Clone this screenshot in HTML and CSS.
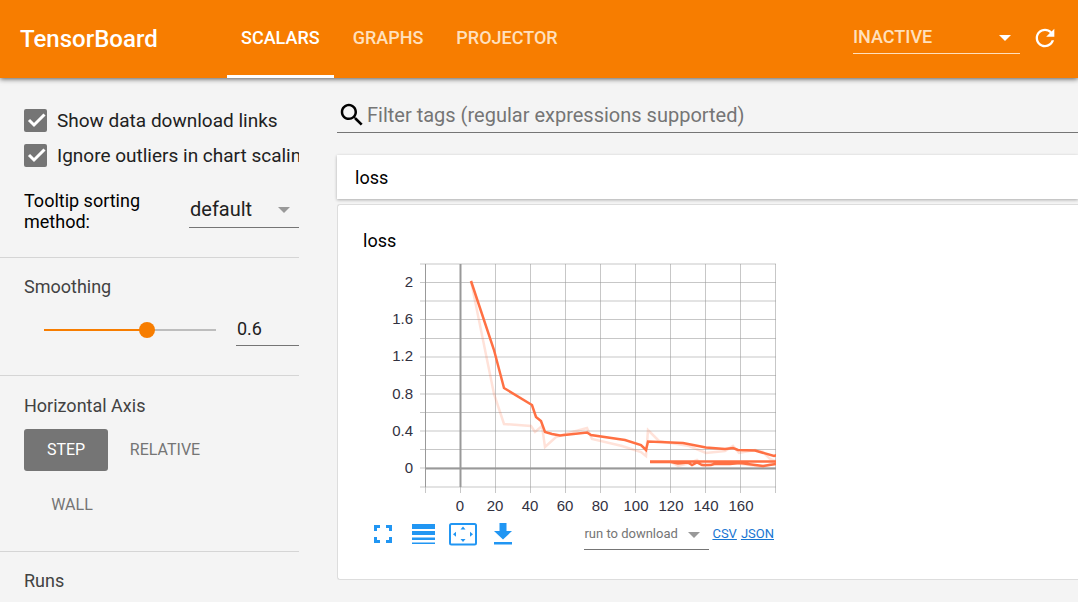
FILE: index.html
```html
<!DOCTYPE html>
<html lang="en">
<head>
<meta charset="utf-8">
<title>TensorBoard</title>
<link rel="stylesheet" href="styles.css">
</head>
<body>
<header class="toolbar">
  <h1 class="brand">TensorBoard</h1>
  <nav class="tabs">
    <a class="tab tab-active" href="#scalars">SCALARS</a>
    <a class="tab" href="#graphs">GRAPHS</a>
    <a class="tab" href="#projector">PROJECTOR</a>
  </nav>
  <div class="select inactive">
    <select aria-label="Inactive dashboards"><option>INACTIVE</option></select>
  </div>
  <button class="icon-button reload" aria-label="Reload">
    <svg width="28" height="28" viewBox="0 0 24 24" fill="currentColor"><path d="M17.65 6.35C16.2 4.9 14.21 4 12 4c-4.42 0-7.99 3.58-7.99 8s3.57 8 7.99 8c3.73 0 6.84-2.55 7.73-6h-2.08c-.82 2.33-3.04 4-5.65 4-3.31 0-6-2.69-6-6s2.69-6 6-6c1.66 0 3.14.69 4.22 1.78L13 11h7V4l-2.35 2.35z"/></svg>
  </button>
</header>
<div class="layout">
  <aside class="sidebar">
    <section class="group options">
      <label class="check">
        <span class="box"><input type="checkbox" checked><svg viewBox="0 0 23 23"><path d="M5 11l5 5L20.500 5.500"/></svg></span>
        <span>Show data download links</span>
      </label>
      <label class="check">
        <span class="box"><input type="checkbox" checked><svg viewBox="0 0 23 23"><path d="M5 11l5 5L20.500 5.500"/></svg></span>
        <span>Ignore outliers in chart scaling</span>
      </label>
      <div class="sorting">
        <label for="sorting">Tooltip sorting method:</label>
        <div class="select sort-select"><select id="sorting"><option>default</option></select></div>
      </div>
    </section>
    <section class="group smoothing">
      <label class="heading" for="smooth">Smoothing</label>
      <div class="slider-row">
        <input class="slider" id="smooth" type="range" min="0" max="1" step="0.1" value="0.6">
        <input class="number" type="text" value="0.6" aria-label="Smoothing value">
      </div>
    </section>
    <section class="group axis">
      <h2 class="heading">Horizontal Axis</h2>
      <div class="axis-buttons">
        <button class="axis-button selected">STEP</button>
        <button class="axis-button">RELATIVE</button>
        <button class="axis-button wall">WALL</button>
      </div>
    </section>
    <section class="group runs">
      <h2 class="heading">Runs</h2>
    </section>
  </aside>
  <main class="content">
    <label class="filter">
      <svg width="30" height="30" viewBox="0 0 24 24"><path d="M15.500 14h-.79l-.28-.27C15.410 12.590 16 11.110 16 9.500 16 5.910 13.090 3 9.500 3S3 5.910 3 9.500 5.910 16 9.500 16c1.610 0 3.090-.59 4.230-1.570l.27.28v.79l5 4.990L20.490 19l-4.990-5zm-6 0C7.010 14 5 11.990 5 9.500S7.010 5 9.500 5 14 7.010 14 9.500 11.990 14 9.500 14z"/></svg>
      <input type="text" placeholder="Filter tags (regular expressions supported)" aria-label="Filter tags">
    </label>
    <button class="category">loss</button>
    <article class="card">
      <h3 class="card-title">loss</h3>
      <svg class="chart" width="414" height="256" viewBox="363 260 414 256" role="img" aria-label="loss chart">
        <defs><clipPath id="plot"><rect x="425" y="263" width="351" height="224"/></clipPath></defs>
        <path class="grid" d="M420 264H776M420 282.500H776M420 301H776M420 319.500H776M420 338.500H776M420 357H776M420 375.500H776M420 394H776M420 412.500H776M420 431H776M420 449.500H776M420 468H776M420 487H776M425.500 264V493M460.500 264V493M495.500 264V493M530.500 264V493M565.500 264V493M600.500 264V493M635.500 264V493M670.500 264V493M705.500 264V493M740.500 264V493M775.500 264V493"/>
        <path class="edge" d="M425.500 264V487"/>
        <path class="zero" d="M460.500 264V487M425 468.500H776"/>
        <g class="series" fill="none" stroke="#ff7043" stroke-width="2.5" clip-path="url(#plot)">
          <path class="raw" d="M471 281L494 394L504 424L531 426L535 432L542 426L545 447L556 437L565 434L587 428L592 439L622 446L641 452L646 456L648 430L659 441L689 446L706 453L725 451L733 446L739 453L755 450L763 452L770 459L776 461M651 462L671 462L678 466L690 463L697 460L704 466L725 462L750 465L763 467L776 462"/>
          <path d="M471 281L494 350L504 388L532 405L536 417L541 421L545 432L552 434L560 435.500L587 432.500L591 435L625 440L641 445L646 450L648 441.500L683 443L706 447.500L725 449L733 448L738 450L755 450.500L774 456L777 455"/>
          <path d="M650 461.500H776M650 462L671 462L678 463.500L688 462.500L692 465L697 462.500L702 465L711 465L714 464L730 464L740 463L763 466L776 464"/>
        </g>
        <g class="ticks y-ticks">
          <text x="413" y="287">2</text><text x="413" y="324">1.6</text><text x="413" y="361">1.2</text><text x="413" y="399">0.8</text><text x="413" y="436">0.4</text><text x="413" y="473">0</text>
        </g>
        <g class="ticks x-ticks">
          <text x="460" y="511">0</text><text x="495" y="511">20</text><text x="530" y="511">40</text><text x="565" y="511">60</text><text x="600" y="511">80</text><text x="636" y="511">100</text><text x="671" y="511">120</text><text x="706" y="511">140</text><text x="741" y="511">160</text>
        </g>
      </svg>
      <div class="actions">
        <button class="icon-button" aria-label="Toggle full size"><svg width="32" height="32" viewBox="0 0 32 32"><path class="line" d="M8.500 13V8.500H13M19 8.500h4.500V13M23.500 19v4.500H19M13 23.500H8.500V19"/></svg></button>
        <button class="icon-button" aria-label="Toggle y-axis log scale"><svg width="32" height="32" viewBox="0 0 32 32"><path d="M5 6h23v5H5zM5 13h23v4H5zM5 19.500h23v2.500H5zM5 24.500h23v1.500H5z"/></svg></button>
        <button class="icon-button" aria-label="Fit domain to data"><svg width="32" height="32" viewBox="0 0 32 32"><rect class="frame" x="3" y="6" width="26" height="20.500" rx="1.500"/><path d="M16 8.500l2.500 3h-5zM16 24l2.500-3h-5zM6 16.200l3-2.500v5zM26 16.200l-3-2.500v5z"/></svg></button>
        <button class="icon-button" aria-label="Download chart"><svg width="32" height="32" viewBox="0 0 32 32"><path d="M12.500 5h7v8h5.500l-9 8.500-9-8.500h5.500zM7 24h18v2.500H7z"/></svg></button>
        <div class="downloads">
          <div class="select run-select"><select aria-label="Run to download"><option>run to download</option></select></div>
          <a href="#csv">CSV</a>
          <a href="#json">JSON</a>
        </div>
      </div>
    </article>
  </main>
</div>
</body>
</html>
```
FILE: styles.css
```css
* { box-sizing: border-box; }
body {
  margin: 0;
  background: #f4f4f4;
  color: #212121;
  font-family: Roboto, sans-serif;
  font-size: 18px;
  overflow: hidden;
}
h1, h2, h3 { margin: 0; font-weight: 400; }
button, input, select { font: inherit; color: inherit; border: 0; margin: 0; padding: 0; background: none; border-radius: 0; outline: 0; }
select { appearance: none; width: 100%; }

.toolbar {
  position: relative;
  display: flex;
  align-items: stretch;
  height: 78px;
  padding: 0 19px 0 20px;
  background: #f77d00;
  color: #fff;
  box-shadow: 0 1px 5px rgba(0, 0, 0, 0.65);
}
.brand { width: 207px; font-size: 24px; font-weight: 500; line-height: 78px; }
.tabs { display: flex; flex: 1; gap: 5px; }
.tab {
  padding: 0 14px;
  line-height: 76px;
  font-weight: 500;
  color: #ffe0bd;
  text-decoration: none;
}
.tab-active { color: #fff; border-bottom: 3px solid #fff; }

.select { position: relative; border-bottom: 1px solid #757575; }
.select::after {
  content: "";
  position: absolute;
  right: 9px;
  top: 50%;
  margin-top: -2px;
  border: 6px solid transparent;
  border-top-color: #999;
  border-bottom: 0;
  pointer-events: none;
}
.inactive { width: 167px; height: 34px; margin: 20px 11px 0 0; border-color: #ffe0bd; color: #ffe0bd; font-weight: 500; }
.inactive select { height: 33px; }
.inactive::after { border-top-color: #fff; }
.icon-button { display: flex; align-items: center; justify-content: center; cursor: pointer; }
.reload { height: 76px; }

.layout { display: flex; align-items: flex-start; }
.sidebar { flex: none; width: 299px; }
.group { padding: 0 0 0 24px; border-bottom: 1px solid #d5d5d5; }
.options { height: 180px; padding-top: 25px; overflow: hidden; }
.check { display: flex; align-items: center; gap: 10px; height: 35px; font-size: 19px; white-space: nowrap; }
.box { display: grid; flex: none; width: 23px; height: 23px; }
.box > * { grid-area: 1 / 1; width: 23px; height: 23px; }
.box input { appearance: none; background: #757575; border-radius: 2px; }
.box svg { fill: none; stroke: #fff; stroke-width: 3; pointer-events: none; }
.sorting { display: flex; justify-content: space-between; padding-top: 17px; line-height: 21px; color: #000; }
.sorting label { width: 130px; }
.sort-select { width: 110px; height: 38px; font-size: 20px; color: #212121; }
.sort-select select { height: 38px; padding-left: 1px; }
.smoothing { height: 118px; padding-top: 18px; }
.heading { display: block; font-size: 18px; line-height: 22px; color: #424242; }
.slider-row { display: flex; justify-content: space-between; align-items: center; margin-top: 14px; padding-left: 12px; }
.slider { appearance: none; width: 188px; height: 16px; margin-top: 2px; }
.slider::-webkit-slider-runnable-track {
  height: 16px;
  background:
    linear-gradient(#f77d00, #f77d00) 8px 7px / 103px 2px no-repeat,
    linear-gradient(#bdbdbd, #bdbdbd) 8px 7px / 172px 2px no-repeat;
}
.slider::-webkit-slider-thumb { appearance: none; width: 16px; height: 16px; border-radius: 50%; background: #f77d00; }
.number { width: 63px; height: 34px; padding: 0 1px; border-bottom: 1px solid #757575; }
.axis { height: 176px; padding-top: 19px; }
.axis-buttons { display: grid; grid-template-columns: 84px 114px; row-gap: 13px; margin-top: 12px; }
.axis-button { height: 42px; padding-bottom: 2px; font-size: 16px; color: #757575; border-radius: 3px; }
.axis-button.selected { background: #757575; color: #fff; }
.axis-button.wall { padding-left: 12px; }
.runs { padding-top: 18px; border: 0; }

.content { flex: 1; min-width: 0; margin-left: 38px; padding-top: 20px; }
.filter { display: flex; align-items: center; height: 35px; border-bottom: 1px solid #757575; }
.filter svg { flex: none; }
.filter input { flex: 1; min-width: 0; font-size: 20px; }
.filter input::placeholder { color: #757575; opacity: 1; }
.category {
  display: block;
  width: 100%;
  height: 44px;
  margin-top: 22px;
  padding-left: 18px;
  background: #fff;
  color: #000;
  text-align: left;
  box-shadow: 0 1px 3px rgba(0, 0, 0, 0.3);
}
.card {
  margin-top: 5px;
  padding: 25px 25px 0;
  background: #fff;
  border: 1px solid #ddd;
  border-right: 0;
  border-radius: 3px 0 0 3px;
  height: 376px;
}
.card-title { font-size: 18px; line-height: 22px; color: #000; }
.chart { display: block; margin-top: 8px; }
.grid { stroke: #999; stroke-opacity: 0.55; }
.edge { stroke: #999; }
.zero { stroke: #999; stroke-width: 2; }
.raw { stroke-opacity: 0.2; }
.ticks { font-family: "Liberation Sans", Arial, sans-serif; font-size: 15px; fill: #32313f; }
.y-ticks { text-anchor: end; }
.x-ticks { text-anchor: middle; }
.actions { display: flex; gap: 8px; width: 411px; margin-top: 2px; padding-left: 4px; }
.actions svg { fill: #2196f3; }
.actions svg .line { fill: none; stroke: #2196f3; stroke-width: 3; }
.actions svg .frame { fill: none; stroke: #2196f3; stroke-width: 2; }
.downloads { display: flex; flex: 1; justify-content: flex-end; gap: 4px; font-size: 13px; line-height: 32px; }
.downloads a { color: #1976d2; }
.run-select { width: 125px; height: 32px; margin-right: -1px; color: #757575; }
.run-select select { height: 30px; }
```
